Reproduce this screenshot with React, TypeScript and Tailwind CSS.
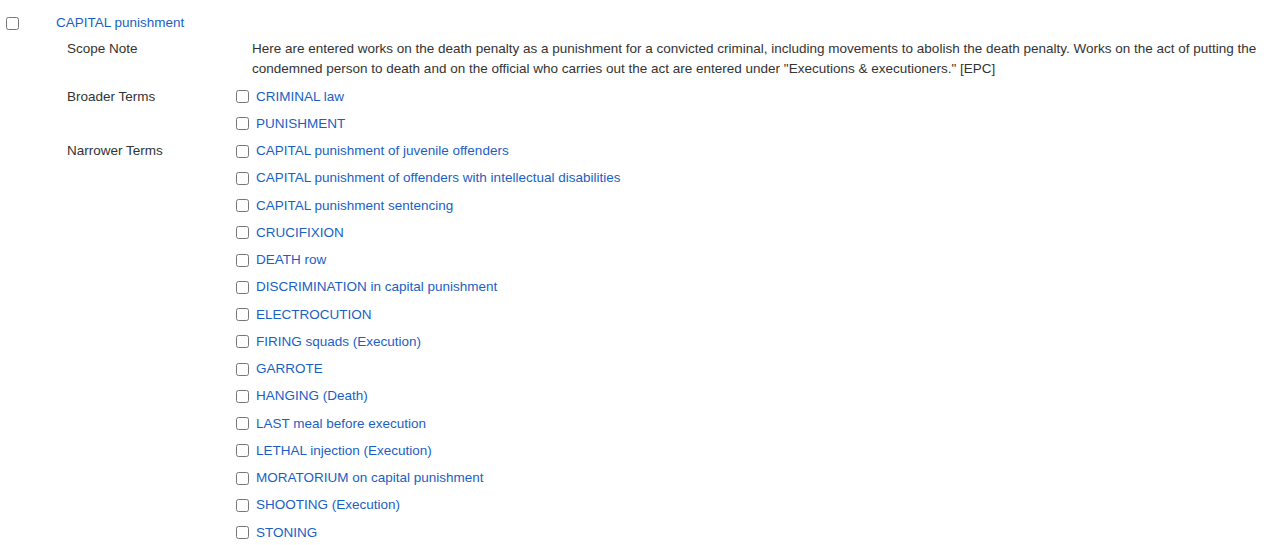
import React from 'react';

const broader = ['CRIMINAL law', 'PUNISHMENT'];
const narrower = [
  'CAPITAL punishment of juvenile offenders',
  'CAPITAL punishment of offenders with intellectual disabilities',
  'CAPITAL punishment sentencing',
  'CRUCIFIXION',
  'DEATH row',
  'DISCRIMINATION in capital punishment',
  'ELECTROCUTION',
  'FIRING squads (Execution)',
  'GARROTE',
  'HANGING (Death)',
  'LAST meal before execution',
  'LETHAL injection (Execution)',
  'MORATORIUM on capital punishment',
  'SHOOTING (Execution)',
  'STONING',
];

function TermList({ label, terms }: { label: string; terms: string[] }) {
  return (
    <div className="flex">
      <div className="w-[165px] shrink-0 py-[3.625px]">{label}</div>
      <ul className="flex-1">
        {terms.map(t => (
          <li key={t} className="flex items-center py-[3.625px]">
            <input type="checkbox" className="m-0 ml-[4px] w-[13px] h-[13px] shrink-0" />
            <a href="#" className="ml-[7px] text-[#1a5fc4] hover:underline">{t}</a>
          </li>
        ))}
      </ul>
    </div>
  );
}

export default function App() {
  return (
    <div className="bg-white text-[#333] text-[13.5px] leading-[20px] pt-[9.5px] pr-[8px]" style={{ fontFamily: '"Liberation Sans", Arial, sans-serif' }}>
      <div className="flex items-center py-[3.625px]">
        <div className="w-[56px] shrink-0 pl-[6px] flex items-center">
          <input type="checkbox" className="m-0 w-[13px] h-[13px]" />
        </div>
        <a href="#" className="text-[#1a5fc4] hover:underline">CAPITAL punishment</a>
      </div>
      <div className="pl-[67px] -mt-[1px]">
        <div className="flex">
          <div className="w-[165px] shrink-0 py-[3.625px]">Scope Note</div>
          <p className="flex-1 pl-[20px] py-[3.625px]">
            Here are entered works on the death penalty as a punishment for a convicted criminal, including movements to abolish the death penalty. Works on the act of putting the condemned person to death and on the official who carries out the act are entered under "Executions &amp; executioners." [EPC]
          </p>
        </div>
        <TermList label="Broader Terms" terms={broader} />
        <TermList label="Narrower Terms" terms={narrower} />
      </div>
    </div>
  );
}
